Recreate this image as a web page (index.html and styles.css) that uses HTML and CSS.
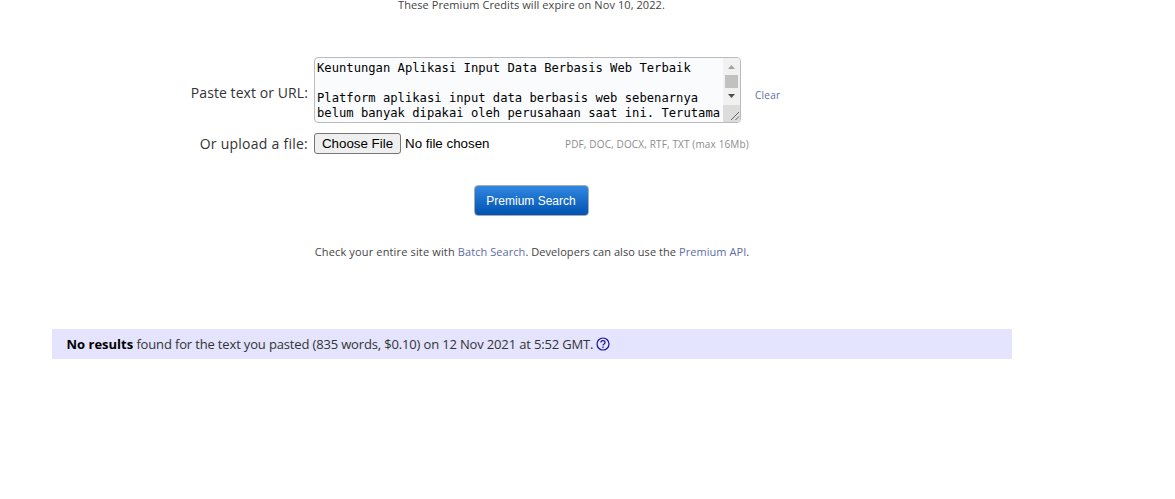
FILE: index.html
```html
<!DOCTYPE html>
<html lang="en">
<head>
<meta charset="utf-8">
<title>Premium Search</title>
<link rel="stylesheet" href="styles.css">
</head>
<body>
<main class="page">
  <p class="expiry">These Premium Credits will expire on Nov 10, 2022.</p>
  <div class="row row-text">
    <span class="label">Paste text or URL:</span>
    <div class="textbox">
      <div class="content">Keuntungan Aplikasi Input Data Berbasis Web Terbaik

Platform aplikasi input data berbasis web sebenarnya
belum banyak dipakai oleh perusahaan saat ini. Terutama</div>
      <svg class="scrollbar" width="17" height="64" viewBox="0 0 17 64">
        <path fill="#f1f1f1" d="M0 0h17v47H0z"/>
        <path fill="#dcdcdc" d="M0 47h17v17H0z"/>
        <path fill="#a3a3a3" d="M5 11l3.500-4 3.500 4z"/>
        <path fill="#c1c1c1" d="M2 17h13v13H2z"/>
        <path fill="#505050" d="M5 36h7l-3.500 4z"/>
        <path fill="none" stroke="#666" d="M8 62l8-8M12.500 62l3.500-3.500"/>
      </svg>
    </div>
    <a class="clear">Clear</a>
  </div>
  <div class="row row-file">
    <span class="label">Or upload a file:</span>
    <button class="choose">Choose File</button>
    <span class="chosen">No file chosen</span>
    <span class="types">PDF, DOC, DOCX, RTF, TXT (max 16Mb)</span>
  </div>
  <button class="search">Premium Search</button>
  <p class="hint"><span class="lead">Check your entire site with </span><a>Batch Search</a>. Developers can also use the <a>Premium API</a>.</p>
  <div class="results">
    <span><b>No results</b> found for the text you pasted (835 words, $0.10) on 12 Nov 2021 at 5:52 GMT.</span>
    <svg class="help" width="14" height="14" viewBox="0 0 14 14" fill="none" stroke="#1a0d9b" stroke-width="1.200">
      <circle cx="7" cy="7" r="6"/>
      <path d="M4.900 5.500c0-2.600 4.200-2.600 4.200 0 0 1.500-2.100 1.500-2.100 3M7 9.600v1.300"/>
    </svg>
  </div>
</main>
</body>
</html>
```
FILE: styles.css
```css
* { box-sizing: border-box; }
body { margin: 0; background: #fff; color: #333; font-family: "Open Sans", sans-serif; }
.page { width: 960px; margin-left: 52px; display: flex; flex-direction: column; white-space: nowrap; }
p { margin: 0; font-size: 11px; line-height: 16px; color: #444; text-align: center; }
a { color: #5b6ea5; }
.expiry { height: 13px; line-height: 10px; letter-spacing: 0.080px; padding-right: 1px; }
.row { display: flex; align-items: center; }
.row-text { margin-top: 44px; height: 66px; }
.label { width: 256px; margin-right: 6px; text-align: right; font-size: 14px; line-height: 20px; letter-spacing: 0.080px; }
.row-text .label { padding-top: 5px; }
.row-file .label { letter-spacing: 0.250px; }
.textbox { display: flex; width: 427px; height: 66px; border: 1px solid #bbb; border-radius: 4px; background: #f9fbfd; overflow: hidden; }
.content { flex: 1; padding: 3px 2px; font: 12.180px/15px "DejaVu Sans Mono", monospace; color: #000; white-space: pre; }
.scrollbar { flex: none; }
.clear { margin-left: 14px; padding-top: 9px; font-size: 10px; line-height: 14px; letter-spacing: 0.250px; }
.row-file { margin-top: 10px; height: 21px; }
.choose { width: 87px; height: 21px; padding: 0; border: 1px solid #767676; border-radius: 3px; background: #efefef; color: #000; font: 13.333px "Liberation Sans", sans-serif; }
.chosen { width: 160px; margin-left: 4px; color: #000; font: 13.333px "Liberation Sans", sans-serif; }
.types { font-size: 10px; color: #8c8c8c; letter-spacing: 0.140px; }
.search { align-self: center; width: 115px; height: 31px; margin: 31px 2px 0 0; padding: 0; border: 1px solid #aaa; border-radius: 4px; background: linear-gradient(#3187e2, #0053ae); color: #fff; font: 12px "Liberation Sans", sans-serif; }
.hint { margin-top: 28px; letter-spacing: 0.060px; }
.lead { letter-spacing: 0.150px; }
.results { display: flex; align-items: center; height: 30px; margin-top: 69px; padding-left: 14.500px; background: #e4e4ff; font-size: 13px; color: #333; letter-spacing: -0.155px; }
.results b { color: #000; letter-spacing: 0; }
.help { margin-left: 3px; margin-top: -1px; }
```
